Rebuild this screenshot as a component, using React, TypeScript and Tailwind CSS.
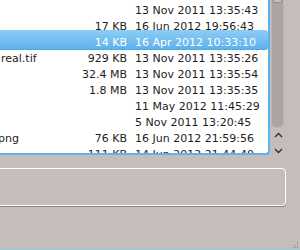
import React from "react";

const rows: { name?: string; nameMl?: number; size: string; date: string; sel?: boolean }[] = [
  { size: "", date: "13 Nov 2011 13:35:43" },
  { size: "17 KB", date: "16 Jun 2012 19:56:43" },
  { size: "14 KB", date: "16 Apr 2012 10:33:10", sel: true },
  { name: "real.tif", nameMl: 1, size: "929 KB", date: "13 Nov 2011 13:35:26" },
  { size: "32.4 MB", date: "13 Nov 2011 13:35:54" },
  { size: "1.8 MB", date: "13 Nov 2011 13:35:35" },
  { size: "", date: "11 May 2012 11:45:29" },
  { size: "", date: "5 Nov 2011 13:20:45" },
  { name: "png", nameMl: -2, size: "76 KB", date: "16 Jun 2012 21:59:56" },
  { size: "111 KB", date: "14 Jun 2012 21:44:40" },
];

export default function App() {
  return (
    <div className="w-[300px] h-[250px] bg-[#c4bdba] flex flex-col overflow-hidden font-['DejaVu_Sans',sans-serif] text-[#1f1c1b]">
      <div className="flex h-[155px] shrink-0">
        <div className="w-[270px] h-[155px] bg-white border-r-2 border-b-2 border-[#5db3ec] rounded-br-[4px] overflow-hidden">
          <div className="pt-[3px] flex flex-col">
            {rows.map((r, i) => (
              <div key={i} className={`relative h-4 flex items-center text-[11px] leading-4 ${r.sel ? "text-white" : ""}`}>
                {r.sel && (
                  <div className="absolute left-0 right-0 top-[-5px] bottom-[1px] rounded-r-[3px] bg-gradient-to-b from-[#8ccdf5] to-[#5eb2ec] border-b border-[#4ea6e3]" />
                )}
                <div className="relative w-[60px] shrink-0 overflow-hidden whitespace-nowrap">
                  {r.name && <span style={{ marginLeft: r.nameMl }} className="inline-block">{r.name}</span>}
                </div>
                <div className="relative w-[67px] shrink-0 text-right whitespace-nowrap">{r.size}</div>
                <div className="relative ml-[8px] whitespace-nowrap">{r.date}</div>
              </div>
            ))}
          </div>
        </div>
        <div className="w-[30px] flex flex-col bg-[#c4bdba]">
          <div className="ml-[1px] w-[13px] h-[128px] rounded-b-[5px] bg-[#aca4a1] border border-t-0 border-[#bcb5b2] flex flex-col items-center">
            <div className="w-[9px] h-[3px] bg-[#c8c1be] border border-t-0 border-[#8e8784] rounded-b-[2px]" />
          </div>
          <div className="ml-[2px] w-[13px] flex flex-col items-center mt-[4px] gap-[10px]">
            <svg width="9" height="6" viewBox="0 0 9 6">
              <path d="M1 5 L4.5 1.5 L8 5" fill="none" stroke="#2e2a29" strokeWidth="1.3" />
            </svg>
            <svg width="9" height="6" viewBox="0 0 9 6">
              <path d="M1 1 L4.5 4.5 L8 1" fill="none" stroke="#2e2a29" strokeWidth="1.3" />
            </svg>
          </div>
        </div>
      </div>
      <div className="h-[13px] shrink-0" />
      <div className="ml-[-6px] w-[292px] h-[38px] shrink-0 rounded-[4px] border border-white shadow-[0_1px_0_#8c8683]" />
      <div className="flex-1 relative">
        <svg className="absolute right-[1px] bottom-0" width="8" height="8" viewBox="0 0 8 8">
          <rect x="6" y="1" width="1" height="1" fill="#8c8683" />
          <rect x="4" y="4" width="1" height="1" fill="#8c8683" />
          <rect x="6" y="4" width="1" height="1" fill="#8c8683" />
          <rect x="2" y="6" width="1" height="1" fill="#8c8683" />
          <rect x="4" y="6" width="1" height="1" fill="#8c8683" />
          <rect x="6" y="6" width="1" height="1" fill="#8c8683" />
        </svg>
      </div>
      <div className="h-[1px] shrink-0 bg-[#8ecdf2]" />
    </div>
  );
}
